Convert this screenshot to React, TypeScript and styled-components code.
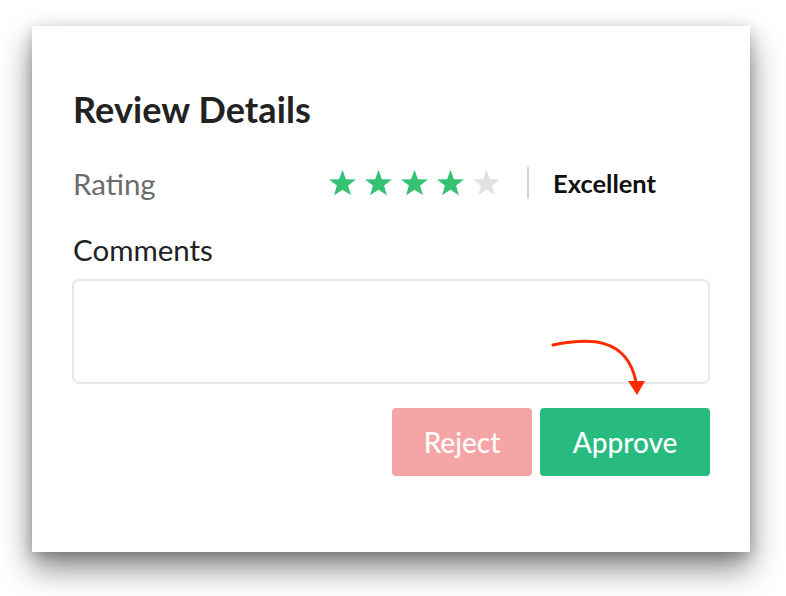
import React from "react";
import styled, { createGlobalStyle } from "styled-components";

const Global = createGlobalStyle`
  html, body { margin: 0; padding: 0; background: #ffffff; }
  body { font-family: Lato, "Open Sans", sans-serif; }
  * { box-sizing: border-box; }
`;

const Page = styled.div`
  width: 786px;
  height: 596px;
  padding: 26px 0 0 32px;
  overflow: hidden;
`;

const Card = styled.div`
  position: relative;
  width: 718px;
  height: 526px;
  background: #ffffff;
  box-shadow: 0 16px 30px rgba(0, 0, 0, 0.48), 0 4px 12px rgba(0, 0, 0, 0.2);
  padding: 63px 40px 0 41px;
  display: flex;
  flex-direction: column;
`;

const Title = styled.h2`
  margin: 0;
  font-family: Lato, sans-serif;
  font-weight: 700;
  font-size: 36px;
  line-height: 40px;
  color: #222222;
  letter-spacing: 0.1px;
`;

const RatingRow = styled.div`
  display: flex;
  align-items: center;
  margin-top: 37px;
  height: 36px;
`;

const Label = styled.div<{ $tone?: string }>`
  font-family: Lato, sans-serif;
  font-size: 29.5px;
  line-height: 34px;
  color: ${(p) => p.$tone || "#222222"};
`;

const RatingLabel = styled(Label)`
  width: 255px;
`;

const Stars = styled.div`
  display: flex;
  gap: 7px;
  margin-top: -3px;
`;

const Divider = styled.div`
  width: 2px;
  height: 32px;
  background: #d4d4d4;
  margin: -3px 24px 0 26px;
`;

const Verdict = styled.div`
  font-family: Lato, sans-serif;
  font-weight: 700;
  font-size: 25.5px;
  color: #111111;
  margin-top: -3px;
`;

const CommentsLabel = styled(Label)`
  margin-top: 31px;
`;

const TextBox = styled.div`
  margin-top: 12px;
  width: 638px;
  height: 105px;
  border: 2px solid #e4e9f0;
  border-radius: 7px;
  margin-left: -1px;
`;

const Actions = styled.div`
  display: flex;
  justify-content: flex-end;
  gap: 8px;
  margin-top: 24px;
  width: 637px;
`;

const Button = styled.button<{ $bg: string; $w: number }>`
  width: ${(p) => p.$w}px;
  height: 68px;
  border: none;
  border-radius: 4px;
  background: ${(p) => p.$bg};
  color: #ffffff;
  font-family: Lato, sans-serif;
  font-size: 28px;
  font-weight: 500;
  cursor: pointer;
`;

const Arrow = styled.svg`
  position: absolute;
  left: 515px;
  top: 310px;
  overflow: visible;
`;

const Star: React.FC<{ color: string }> = ({ color }) => (
  <svg width="29" height="28" viewBox="0 0 24 23">
    <path
      d="M12 0.5 L14.8 8.3 L23.2 8.5 L16.6 13.6 L19 21.7 L12 17 L5 21.7 L7.4 13.6 L0.8 8.5 L9.2 8.3 Z"
      fill={color}
    />
  </svg>
);

export default function App() {
  const rating = 4;
  return (
    <>
      <Global />
      <Page>
        <Card>
          <Title>Review Details</Title>
          <RatingRow>
            <RatingLabel $tone="#6b6b6b">Rating</RatingLabel>
            <Stars>
              {[0, 1, 2, 3, 4].map((i) => (
                <Star key={i} color={i < rating ? "#35c172" : "#e2e2e2"} />
              ))}
            </Stars>
            <Divider />
            <Verdict>Excellent</Verdict>
          </RatingRow>
          <CommentsLabel>Comments</CommentsLabel>
          <TextBox />
          <Actions>
            <Button $bg="#f5a5a5" $w={140}>Reject</Button>
            <Button $bg="#27bb7f" $w={170}>Approve</Button>
          </Actions>
          <Arrow width="100" height="80">
            <path
              d="M6 9 C 40 2, 80 0, 89 46"
              fill="none"
              stroke="#ff2a00"
              strokeWidth="3"
              strokeLinecap="round"
            />
            <path d="M81 45 L98 45 L90 59 Z" fill="#ff2a00" />
          </Arrow>
        </Card>
      </Page>
    </>
  );
}
